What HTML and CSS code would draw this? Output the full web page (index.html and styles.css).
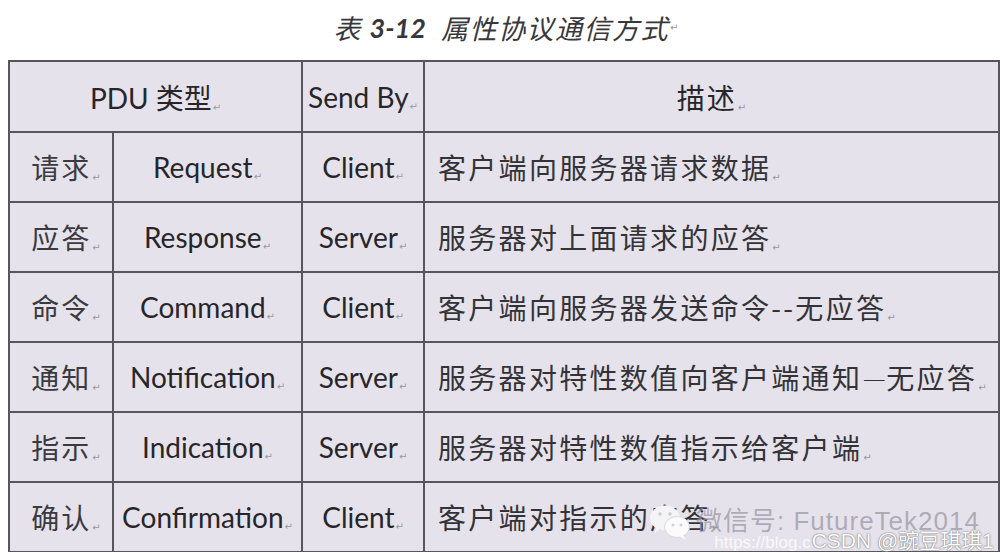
FILE: index.html
```html
<!DOCTYPE html>
<html lang="zh">
<head>
<meta charset="utf-8">
<title>表 3-12 属性协议通信方式</title>
<link rel="stylesheet" href="styles.css">
</head>
<body>
<div class="page">
  <h1 class="caption">表 <span class="cap-num">3-12</span>&nbsp; 属性协议通信方式<span class="pm">↵</span></h1>
  <div class="table-wrap">
    <table class="pdu">
      <colgroup>
        <col class="c1"><col class="c2"><col class="c3"><col class="c4">
      </colgroup>
      <thead>
        <tr class="head">
          <th colspan="2">PDU 类型<span class="pm">↵</span></th>
          <th>Send By<span class="pm">↵</span></th>
          <th class="zh-h">描述<span class="pm">↵</span></th>
        </tr>
      </thead>
      <tbody>
        <tr>
          <td class="zh">请求<span class="pm">↵</span></td>
          <td class="en">Request<span class="pm">↵</span></td>
          <td class="en">Client<span class="pm">↵</span></td>
          <td class="desc">客户端向服务器请求数据<span class="pm">↵</span></td>
        </tr>
        <tr>
          <td class="zh">应答<span class="pm">↵</span></td>
          <td class="en">Response<span class="pm">↵</span></td>
          <td class="en">Server<span class="pm">↵</span></td>
          <td class="desc">服务器对上面请求的应答<span class="pm">↵</span></td>
        </tr>
        <tr>
          <td class="zh">命令<span class="pm">↵</span></td>
          <td class="en">Command<span class="pm">↵</span></td>
          <td class="en">Client<span class="pm">↵</span></td>
          <td class="desc">客户端向服务器发送命令--无应答<span class="pm">↵</span></td>
        </tr>
        <tr>
          <td class="zh">通知<span class="pm">↵</span></td>
          <td class="en">Notification<span class="pm">↵</span></td>
          <td class="en">Server<span class="pm">↵</span></td>
          <td class="desc">服务器对特性数值向客户端通知<span class="dash">—</span>无应答<span class="pm">↵</span></td>
        </tr>
        <tr>
          <td class="zh">指示<span class="pm">↵</span></td>
          <td class="en">Indication<span class="pm">↵</span></td>
          <td class="en">Server<span class="pm">↵</span></td>
          <td class="desc">服务器对特性数值指示给客户端<span class="pm">↵</span></td>
        </tr>
        <tr>
          <td class="zh">确认<span class="pm">↵</span></td>
          <td class="en">Confirmation<span class="pm">↵</span></td>
          <td class="en">Client<span class="pm">↵</span></td>
          <td class="desc">客户端对指示的应答<span class="pm">↵</span></td>
        </tr>
      </tbody>
    </table>
    <div class="watermark">
      <svg class="wx" viewBox="0 0 44 38" width="44" height="38" aria-hidden="true">
        <ellipse cx="17" cy="15" rx="15" ry="12.5" fill="#f4f3f6"/>
        <path d="M8 24 L6 30 L13 26 Z" fill="#f4f3f6"/>
        <ellipse cx="29" cy="24" rx="12.5" ry="10.5" fill="#fbfbfc" stroke="#d9d6de" stroke-width="1"/>
        <path d="M35 32 L38 37 L31 33 Z" fill="#fbfbfc"/>
        <circle cx="12" cy="11" r="1.8" fill="#cfcbd6"/>
        <circle cx="22" cy="11" r="1.8" fill="#cfcbd6"/>
        <circle cx="25" cy="22" r="1.5" fill="#d4d0da"/>
        <circle cx="33" cy="22" r="1.5" fill="#d4d0da"/>
      </svg>
      <span class="wx-id">微信号: FutureTek2014</span>
    </div>
    <div class="csdn">
      <span class="url">https://blog.c</span><span class="author">CSDN @豌豆琪琪1</span>
    </div>
  </div>
</div>
</body>
</html>
```

FILE: styles.css
```css
html, body {
  margin: 0;
  padding: 0;
  background: #ffffff;
}

.page {
  width: 1000px;
  height: 552px;
  overflow: hidden;
}

.caption {
  margin: 0;
  height: 54px;
  padding: 0 0 6px 12px;
  display: flex;
  align-items: center;
  justify-content: center;
  font-family: "Noto Sans CJK SC", "Noto Sans", sans-serif;
  font-style: italic;
  font-weight: 400;
  font-size: 27px;
  color: #38383c;
  letter-spacing: 1.5px;
  white-space: pre;
}

.caption .cap-num {
  font-family: "Lato", "Noto Sans CJK SC", sans-serif;
  font-weight: 700;
  letter-spacing: 0;
}

.caption .pm {
  font-style: normal;
}

.table-wrap {
  position: relative;
  margin-left: 8px;
  width: 990px;
}

.pdu {
  border-collapse: collapse;
  table-layout: fixed;
  width: 990px;
  background: #e6e2ec;
  color: #26262a;
  font-family: "Lato", "Noto Sans CJK SC", sans-serif;
  font-size: 28px;
}

.c1 { width: 104px; }
.c2 { width: 189px; }
.c3 { width: 122px; }
.c4 { width: 575px; }

.pdu th,
.pdu td {
  border: 2px solid #58565c;
  height: 68px;
  padding: 0;
  text-align: center;
  vertical-align: middle;
  white-space: nowrap;
}

.pdu th {
  font-weight: 400;
  height: 69px;
}

.pdu .zh,
.pdu .desc,
.pdu .zh-h {
  font-family: "Noto Sans CJK SC", sans-serif;
}

.pdu .zh {
  font-size: 28px;
  letter-spacing: 2px;
  color: #3a3a3f;
  padding-left: 10px;
}

.pdu .zh-h {
  font-size: 28px;
  letter-spacing: 2px;
}

.pdu .desc {
  text-align: left;
  padding-left: 13px;
  font-size: 28px;
  letter-spacing: 2.3px;
  color: #333337;
}

.pdu .desc .dash {
  letter-spacing: 0;
  font-size: 24px;
}

.pm {
  font-family: "DejaVu Sans", sans-serif;
  font-size: 10px;
  color: #9a98a0;
  letter-spacing: 0;
  vertical-align: -2px;
  margin-left: 1px;
}

.watermark {
  position: absolute;
  left: 640px;
  bottom: 12px;
  display: flex;
  align-items: center;
  gap: 4px;
  pointer-events: none;
}

.wx {
  display: block;
}

.wx-id {
  font-family: "Liberation Sans", "Noto Sans CJK SC", sans-serif;
  font-size: 26px;
  color: rgba(150, 146, 158, 0.7);
  letter-spacing: 1px;
  margin-top: -8px;
}

.csdn {
  position: absolute;
  right: 4px;
  bottom: -1px;
  display: flex;
  align-items: baseline;
  gap: 1px;
  pointer-events: none;
}

.csdn .url {
  font-family: "Liberation Sans", sans-serif;
  font-size: 17px;
  color: rgba(255, 255, 255, 0.8);
}

.csdn .author {
  font-family: "Liberation Sans", "Noto Sans CJK SC", sans-serif;
  font-size: 21px;
  color: #ffffff;
  text-shadow: 0 0 1px #666, 0 0 2px #888;
}
```
